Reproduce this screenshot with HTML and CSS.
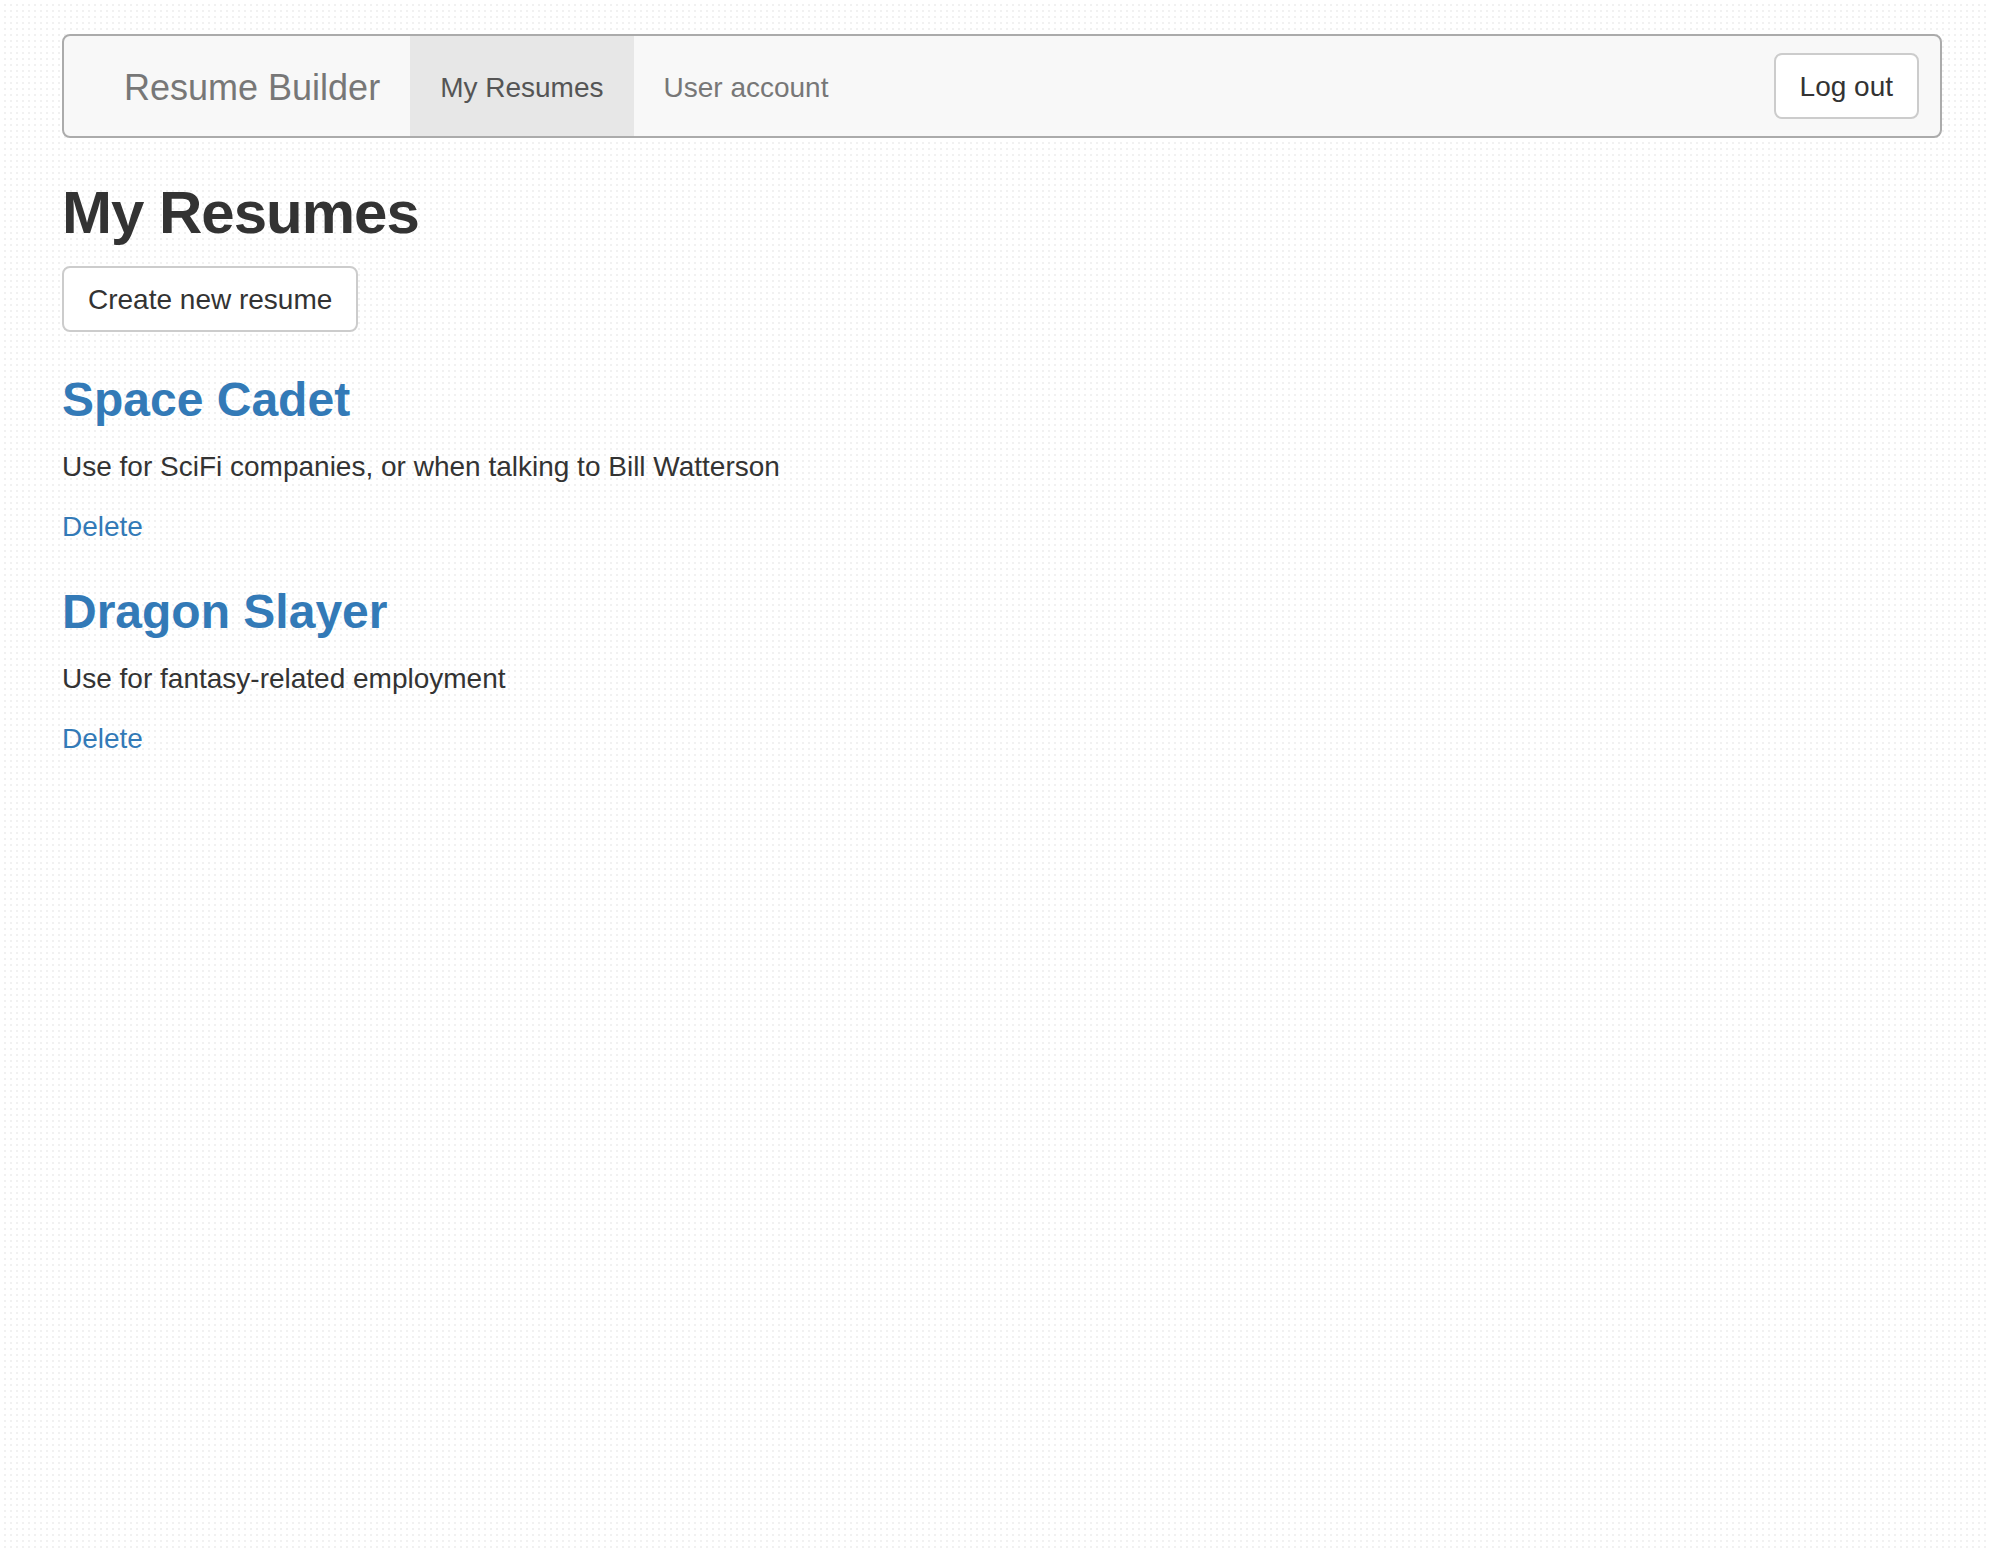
FILE: index.html
```html
<!DOCTYPE html>
<html lang="en">
<head>
<meta charset="utf-8">
<title>Resume Builder</title>
<link rel="stylesheet" href="styles.css">
</head>
<body>
<div class="page">
  <nav class="navbar">
    <a class="brand" href="#">Resume Builder</a>
    <ul class="nav">
      <li class="nav-item active"><a href="#">My Resumes</a></li>
      <li class="nav-item"><a href="#">User account</a></li>
    </ul>
    <button class="btn nav-btn" type="button">Log out</button>
  </nav>

  <main class="content">
    <h1 class="page-title">My Resumes</h1>
    <div class="actions">
      <button class="btn" type="button">Create new resume</button>
    </div>

    <section class="resume">
      <h3 class="resume-title"><a href="#">Space Cadet</a></h3>
      <p class="resume-desc">Use for SciFi companies, or when talking to Bill Watterson</p>
      <div class="resume-links"><a href="#">Delete</a></div>
    </section>

    <section class="resume">
      <h3 class="resume-title"><a href="#">Dragon Slayer</a></h3>
      <p class="resume-desc">Use for fantasy-related employment</p>
      <div class="resume-links"><a href="#">Delete</a></div>
    </section>
  </main>
</div>
</body>
</html>
```

FILE: styles.css
```css
html, body {
  margin: 0;
  padding: 0;
}

body {
  min-height: 1548px;
  font-family: "Liberation Sans", Arial, Helvetica, sans-serif;
  font-size: 28px;
  line-height: 40px;
  color: #333;
  background-color: #fff;
  background-image:
    linear-gradient(90deg, #fff 4px, transparent 4px),
    linear-gradient(#fff 4px, #f1f1f1 4px);
  background-size: 6px 6px, 6px 6px;
}

a {
  color: #337ab7;
  text-decoration: none;
}

.page {
  width: 1880px;
  margin-left: 62px;
  padding-top: 34px;
}

/* Navbar */
.navbar {
  box-sizing: border-box;
  height: 104px;
  display: flex;
  align-items: center;
  padding: 0 21px 0 30px;
  background: #f8f8f8;
  border: 2px solid #ababab;
  border-radius: 8px;
}

.brand {
  box-sizing: border-box;
  display: flex;
  align-items: center;
  height: 100px;
  padding: 3px 30px 0;
  font-size: 36px;
  color: #777;
}

.nav {
  display: flex;
  margin: 0;
  padding: 0;
  list-style: none;
}

.nav-item a {
  box-sizing: border-box;
  display: flex;
  align-items: center;
  height: 100px;
  padding: 3px 30px 0;
  color: #777;
}

.nav-item.active a {
  background: #e7e7e7;
  color: #555;
}

.btn {
  box-sizing: border-box;
  height: 66px;
  padding: 12px 24px 10px;
  font-family: inherit;
  font-size: 28px;
  line-height: 40px;
  color: #333;
  background: #fff;
  border: 2px solid #ccc;
  border-radius: 8px;
  cursor: pointer;
}

.nav-btn {
  margin-left: auto;
}

/* Content */
.page-title {
  margin: 42px 0 20px;
  font-size: 60px;
  line-height: 66px;
  font-weight: bold;
  letter-spacing: -1px;
  color: #333;
}

.actions {
  margin: 0;
  padding-bottom: 2px;
}

.resume {
  margin-top: 39px;
}

.resume + .resume {
  margin-top: 38px;
}

.resume-title {
  margin: 0 0 21px;
  font-size: 48px;
  line-height: 53px;
  font-weight: bold;
}

.resume-desc {
  margin: 0 0 20px;
}

.resume-links {
  line-height: 40px;
}
```
